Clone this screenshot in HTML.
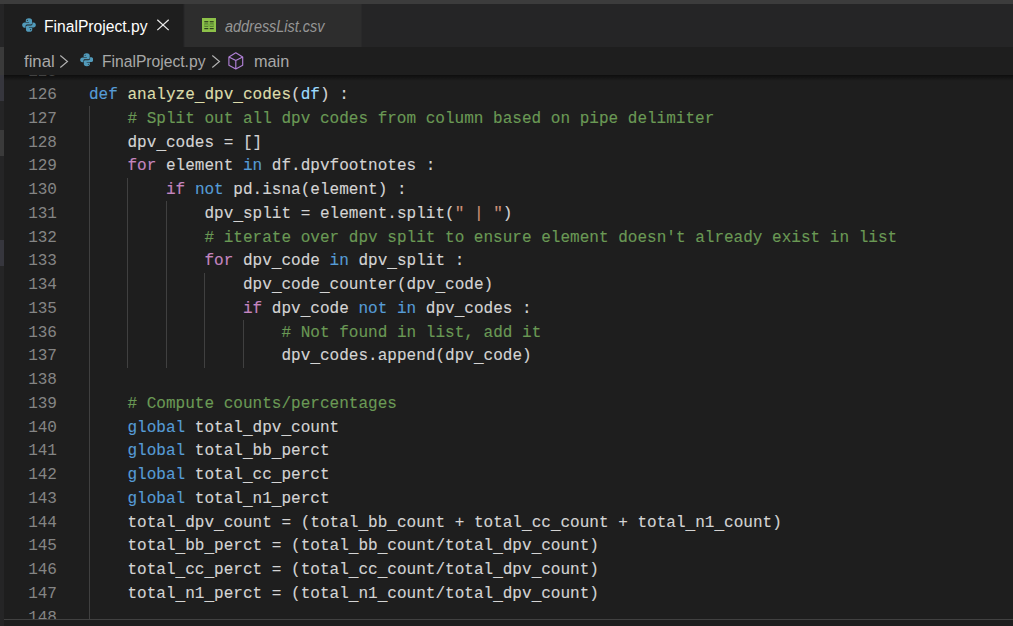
<!DOCTYPE html>
<html><head><meta charset="utf-8"><title>FinalProject.py</title>
<style>
html,body{margin:0;padding:0;}
body{width:1013px;height:626px;overflow:hidden;background:#1e1e1e;position:relative;font-family:"Liberation Sans",sans-serif;}
.abs{position:absolute;}
#top{left:0;top:0;width:1013px;height:4px;background:#3c3c3c;}
#side{left:0;top:4px;width:4px;height:622px;background:#252526;}
.sel{position:absolute;left:0;width:4px;background:#3a3a3a;}
#tabs{left:4px;top:4px;width:1009px;height:43px;background:#252526;}
#tab1{left:4px;top:4px;width:179px;border-right:1px solid #222223;height:43px;background:#1e1e1e;}
#tab2{left:184px;top:4px;width:176px;border-left:1px solid #29292a;border-right:1px solid #29292a;height:43px;background:#2d2d2d;}
.tlabel{position:absolute;transform-origin:0 50%;white-space:nowrap;font-size:16.25px;line-height:20px;}
#crumbs{left:4px;top:47px;width:1009px;height:28px;background:#1e1e1e;}
.bc{position:absolute;transform-origin:0 50%;white-space:nowrap;font-size:16.25px;line-height:20px;color:#a9a9a9;}
#editor{left:4px;top:75px;width:1009px;height:544px;background:#1e1e1e;overflow:hidden;}
#shadow{left:4px;top:75px;width:1009px;height:6px;background:linear-gradient(#000 0,rgba(0,0,0,0) 100%);opacity:.55;}
#lines{position:absolute;left:-4px;top:-14.6px;width:1013px;}
.ln{position:relative;height:23.75px;white-space:pre;font-family:"Liberation Mono",monospace;font-size:16.04px;line-height:23.75px;}
.no{position:absolute;left:0;width:57px;text-align:right;color:#858585;}
.cd{position:absolute;top:0;-webkit-text-stroke:0.12px;}
.cd b{font-weight:normal;position:relative;top:2px;}
.g{position:absolute;top:-1.5px;width:1px;height:23.75px;background:#404040;}
#pborder{left:4px;top:619px;width:1009px;height:1px;background:#414141;}
#panel{left:4px;top:620px;width:1009px;height:6px;background:#1e1e1e;}
#t1{transform:scaleX(.963);}#t2{transform:scaleX(.888);}#b2{transform:scaleX(.963);}#b1{transform:scaleX(1.03);}
</style></head><body>
<div id="tabs" class="abs"></div>
<div id="tab1" class="abs"></div>
<div id="tab2" class="abs"></div>
<div id="crumbs" class="abs"></div>
<div id="editor" class="abs"><div id="lines">
<div class="ln"><span class="no" style="top:1px">125</span><span class="cd" style="left:89.000px"></span></div>
<div class="ln"><span class="no">126</span><span class="cd" style="left:89.000px"><span style="color:#569cd6">def</span><span style="color:#d4d4d4"> </span><span style="color:#dcdcaa">analyze<b>_</b>dpv<b>_</b>codes</span><span style="color:#d4d4d4">(</span><span style="color:#9cdcfe">df</span><span style="color:#d4d4d4">) :</span></span></div>
<div class="ln"><span class="no">127</span><i class="g" style="left:89px"></i><span class="cd" style="left:127.500px"><span style="color:#6a9955"># Split out all dpv codes from column based on pipe delimiter</span></span></div>
<div class="ln"><span class="no">128</span><i class="g" style="left:89px"></i><span class="cd" style="left:127.500px"><span style="color:#d4d4d4">dpv<b>_</b>codes = []</span></span></div>
<div class="ln"><span class="no">129</span><i class="g" style="left:89px"></i><span class="cd" style="left:127.500px"><span style="color:#c586c0">for</span><span style="color:#d4d4d4"> element </span><span style="color:#569cd6">in</span><span style="color:#d4d4d4"> df.dpvfootnotes :</span></span></div>
<div class="ln"><span class="no">130</span><i class="g" style="left:89px"></i><i class="g" style="left:127px"></i><span class="cd" style="left:166.000px"><span style="color:#c586c0">if</span><span style="color:#d4d4d4"> </span><span style="color:#569cd6">not</span><span style="color:#d4d4d4"> pd.isna(element) :</span></span></div>
<div class="ln"><span class="no">131</span><i class="g" style="left:89px"></i><i class="g" style="left:127px"></i><i class="g" style="left:166px"></i><span class="cd" style="left:204.500px"><span style="color:#d4d4d4">dpv<b>_</b>split = element.split(</span><span style="color:#ce9178">" | "</span><span style="color:#d4d4d4">)</span></span></div>
<div class="ln"><span class="no">132</span><i class="g" style="left:89px"></i><i class="g" style="left:127px"></i><i class="g" style="left:166px"></i><span class="cd" style="left:204.500px"><span style="color:#6a9955"># iterate over dpv split to ensure element doesn't already exist in list</span></span></div>
<div class="ln"><span class="no">133</span><i class="g" style="left:89px"></i><i class="g" style="left:127px"></i><i class="g" style="left:166px"></i><span class="cd" style="left:204.500px"><span style="color:#c586c0">for</span><span style="color:#d4d4d4"> dpv<b>_</b>code </span><span style="color:#569cd6">in</span><span style="color:#d4d4d4"> dpv<b>_</b>split :</span></span></div>
<div class="ln"><span class="no">134</span><i class="g" style="left:89px"></i><i class="g" style="left:127px"></i><i class="g" style="left:166px"></i><i class="g" style="left:204px"></i><span class="cd" style="left:243.000px"><span style="color:#d4d4d4">dpv<b>_</b>code<b>_</b>counter(dpv<b>_</b>code)</span></span></div>
<div class="ln"><span class="no">135</span><i class="g" style="left:89px"></i><i class="g" style="left:127px"></i><i class="g" style="left:166px"></i><i class="g" style="left:204px"></i><span class="cd" style="left:243.000px"><span style="color:#c586c0">if</span><span style="color:#d4d4d4"> dpv<b>_</b>code </span><span style="color:#569cd6">not</span><span style="color:#d4d4d4"> </span><span style="color:#569cd6">in</span><span style="color:#d4d4d4"> dpv<b>_</b>codes :</span></span></div>
<div class="ln"><span class="no">136</span><i class="g" style="left:89px"></i><i class="g" style="left:127px"></i><i class="g" style="left:166px"></i><i class="g" style="left:204px"></i><i class="g" style="left:243px"></i><span class="cd" style="left:281.500px"><span style="color:#6a9955"># Not found in list, add it</span></span></div>
<div class="ln"><span class="no">137</span><i class="g" style="left:89px"></i><i class="g" style="left:127px"></i><i class="g" style="left:166px"></i><i class="g" style="left:204px"></i><i class="g" style="left:243px"></i><span class="cd" style="left:281.500px"><span style="color:#d4d4d4">dpv<b>_</b>codes.append(dpv<b>_</b>code)</span></span></div>
<div class="ln"><span class="no">138</span><i class="g" style="left:89px"></i><span class="cd" style="left:127.500px"></span></div>
<div class="ln"><span class="no">139</span><i class="g" style="left:89px"></i><span class="cd" style="left:127.500px"><span style="color:#6a9955"># Compute counts/percentages</span></span></div>
<div class="ln"><span class="no">140</span><i class="g" style="left:89px"></i><span class="cd" style="left:127.500px"><span style="color:#569cd6">global</span><span style="color:#d4d4d4"> total<b>_</b>dpv<b>_</b>count</span></span></div>
<div class="ln"><span class="no">141</span><i class="g" style="left:89px"></i><span class="cd" style="left:127.500px"><span style="color:#569cd6">global</span><span style="color:#d4d4d4"> total<b>_</b>bb<b>_</b>perct</span></span></div>
<div class="ln"><span class="no">142</span><i class="g" style="left:89px"></i><span class="cd" style="left:127.500px"><span style="color:#569cd6">global</span><span style="color:#d4d4d4"> total<b>_</b>cc<b>_</b>perct</span></span></div>
<div class="ln"><span class="no">143</span><i class="g" style="left:89px"></i><span class="cd" style="left:127.500px"><span style="color:#569cd6">global</span><span style="color:#d4d4d4"> total<b>_</b>n1<b>_</b>perct</span></span></div>
<div class="ln"><span class="no">144</span><i class="g" style="left:89px"></i><span class="cd" style="left:127.500px"><span style="color:#d4d4d4">total<b>_</b>dpv<b>_</b>count = (total<b>_</b>bb<b>_</b>count + total<b>_</b>cc<b>_</b>count + total<b>_</b>n1<b>_</b>count)</span></span></div>
<div class="ln"><span class="no">145</span><i class="g" style="left:89px"></i><span class="cd" style="left:127.500px"><span style="color:#d4d4d4">total<b>_</b>bb<b>_</b>perct = (total<b>_</b>bb<b>_</b>count/total<b>_</b>dpv<b>_</b>count)</span></span></div>
<div class="ln"><span class="no">146</span><i class="g" style="left:89px"></i><span class="cd" style="left:127.500px"><span style="color:#d4d4d4">total<b>_</b>cc<b>_</b>perct = (total<b>_</b>cc<b>_</b>count/total<b>_</b>dpv<b>_</b>count)</span></span></div>
<div class="ln"><span class="no">147</span><i class="g" style="left:89px"></i><span class="cd" style="left:127.500px"><span style="color:#d4d4d4">total<b>_</b>n1<b>_</b>perct = (total<b>_</b>n1<b>_</b>count/total<b>_</b>dpv<b>_</b>count)</span></span></div>
<div class="ln"><span class="no">148</span><i class="g" style="left:89px"></i><span class="cd" style="left:127.500px"></span></div>
</div></div>
<div id="shadow" class="abs"></div>
<div id="pborder" class="abs"></div>
<div id="panel" class="abs"></div>
<div id="side" class="abs">
<div class="sel" style="top:43px;height:28px"></div>
<div class="sel" style="top:71px;height:26px;background:#36363d"></div>
<div class="sel" style="top:126px;height:26px"></div>
<div class="sel" style="top:236px;height:26px;background:#36363d"></div>
</div>
<div id="top" class="abs"></div>
<!-- tab 1 -->
<svg class="abs" style="left:21.5px;top:18px" width="14" height="14" viewBox="0 0 16 16"><g fill="#519aba"><path d="M8 0.3C5 0.3 4.3 1.6 4.3 3V4.6H8.1V5.2H2.9C1.3 5.2 0.2 6.4 0.2 8C0.2 9.6 1.2 11 2.8 11H4.1V9.2C4.1 8.1 5 7.5 6.1 7.5H9.8C10.8 7.5 11.5 6.7 11.5 5.6V3C11.5 1.6 10.6 0.3 8 0.3ZM6.1 2.1A0.6 0.6 0 1 1 6.1 3.3A0.6 0.6 0 1 1 6.1 2.1Z"/><path transform="rotate(180 8 8)" d="M8 0.3C5 0.3 4.3 1.6 4.3 3V4.6H8.1V5.2H2.9C1.3 5.2 0.2 6.4 0.2 8C0.2 9.6 1.2 11 2.8 11H4.1V9.2C4.1 8.1 5 7.5 6.1 7.5H9.8C10.8 7.5 11.5 6.7 11.5 5.6V3C11.5 1.6 10.6 0.3 8 0.3ZM6.1 2.1A0.6 0.6 0 1 1 6.1 3.3A0.6 0.6 0 1 1 6.1 2.1Z"/></g></svg>
<div class="tlabel" id="t1" style="left:44px;top:16px;color:#fff">FinalProject.py</div>
<svg class="abs" style="left:155px;top:17px" width="16" height="16" viewBox="0 0 16 16"><path d="M2.3 2.7L13.7 13.1M13.7 2.7L2.3 13.1" stroke="#e8e8e8" stroke-width="1.25" fill="none"/></svg>
<!-- tab 2 -->
<svg class="abs" style="left:202px;top:18px" width="14" height="14" viewBox="0 0 14 14"><rect width="14" height="14" fill="#8dc149"/><g fill="#23301a"><rect x="2.3" y="3.2" width="4" height="1.1"/><rect x="7.7" y="3.2" width="4" height="1.1"/><rect x="2.3" y="10.1" width="4" height="1.1"/><rect x="7.7" y="10.1" width="4" height="1.1"/></g><g fill="#527c30"><rect x="2.3" y="5.3" width="4" height="3.6"/><rect x="7.7" y="5.3" width="4" height="3.6"/></g><g fill="#7bb043"><rect x="2.3" y="6.3" width="4" height="1.7"/><rect x="7.7" y="6.3" width="4" height="1.7"/></g></svg>
<div class="tlabel" id="t2" style="left:225px;top:16px;color:#969696;font-style:italic">addressList.csv</div>
<!-- breadcrumbs -->
<div class="bc" id="b1" style="left:24px;top:51px">final</div>
<svg class="abs" style="left:58px;top:53px" width="12" height="17" viewBox="0 0 12 17"><path d="M2.3 2.5L9.5 8.5L2.3 14.5" stroke="#b2b2b2" stroke-width="1.15" fill="none"/></svg>
<svg class="abs" style="left:79.6px;top:53.1px" width="13.5" height="13.5" viewBox="0 0 16 16"><g fill="#519aba"><path d="M8 0.3C5 0.3 4.3 1.6 4.3 3V4.6H8.1V5.2H2.9C1.3 5.2 0.2 6.4 0.2 8C0.2 9.6 1.2 11 2.8 11H4.1V9.2C4.1 8.1 5 7.5 6.1 7.5H9.8C10.8 7.5 11.5 6.7 11.5 5.6V3C11.5 1.6 10.6 0.3 8 0.3ZM6.1 2.1A0.6 0.6 0 1 1 6.1 3.3A0.6 0.6 0 1 1 6.1 2.1Z"/><path transform="rotate(180 8 8)" d="M8 0.3C5 0.3 4.3 1.6 4.3 3V4.6H8.1V5.2H2.9C1.3 5.2 0.2 6.4 0.2 8C0.2 9.6 1.2 11 2.8 11H4.1V9.2C4.1 8.1 5 7.5 6.1 7.5H9.8C10.8 7.5 11.5 6.7 11.5 5.6V3C11.5 1.6 10.6 0.3 8 0.3ZM6.1 2.1A0.6 0.6 0 1 1 6.1 3.3A0.6 0.6 0 1 1 6.1 2.1Z"/></g></svg>
<div class="bc" id="b2" style="left:102px;top:51px">FinalProject.py</div>
<svg class="abs" style="left:210px;top:53px" width="12" height="17" viewBox="0 0 12 17"><path d="M2.3 2.5L9.5 8.5L2.3 14.5" stroke="#b2b2b2" stroke-width="1.15" fill="none"/></svg>
<svg class="abs" style="left:226px;top:50px" width="20" height="22" viewBox="0 0 20 22"><path d="M9.8 2.8L16.7 6.95V15.2L9.8 18.9L2.9 15.2V6.95ZM2.9 6.95L9.8 10.6L16.7 6.95M9.8 10.6V18.9" stroke="#b180d7" stroke-width="1.15" fill="none" stroke-linejoin="round"/></svg>
<div class="bc" id="b3" style="left:254px;top:51px">main</div>
</body></html>
